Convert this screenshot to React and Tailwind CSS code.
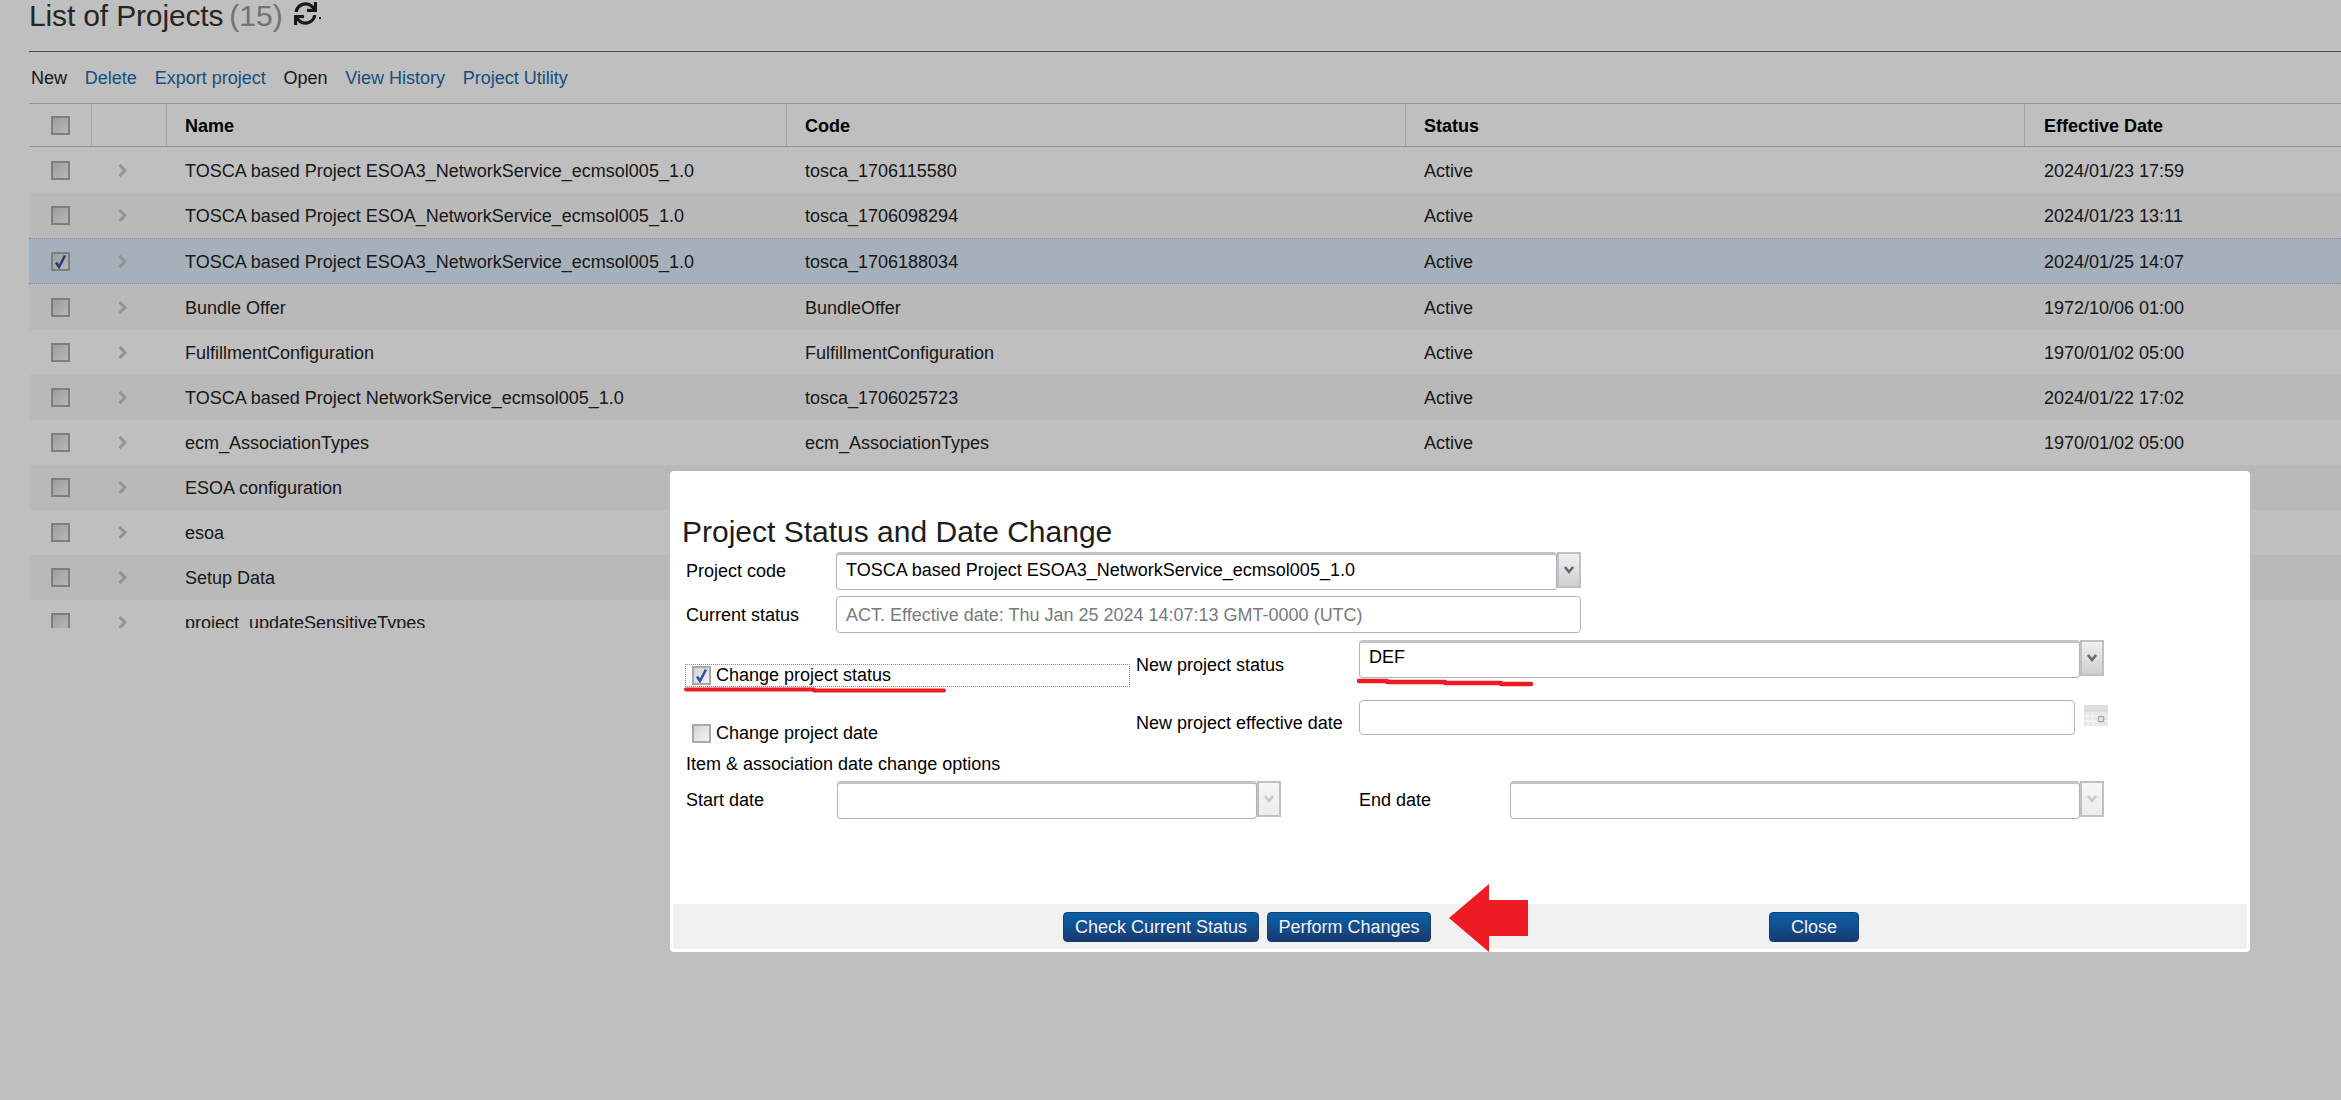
import { FaSync } from "react-icons/fa";

const projects = [
  { name: "TOSCA based Project ESOA3_NetworkService_ecmsol005_1.0", code: "tosca_1706115580", status: "Active", date: "2024/01/23 17:59", h: "h-[46px]" },
  { name: "TOSCA based Project ESOA_NetworkService_ecmsol005_1.0", code: "tosca_1706098294", status: "Active", date: "2024/01/23 13:11" },
  { name: "TOSCA based Project ESOA3_NetworkService_ecmsol005_1.0", code: "tosca_1706188034", status: "Active", date: "2024/01/25 14:07", h: "h-[46px]", selected: true },
  { name: "Bundle Offer", code: "BundleOffer", status: "Active", date: "1972/10/06 01:00", h: "h-[46px]" },
  { name: "FulfillmentConfiguration", code: "FulfillmentConfiguration", status: "Active", date: "1970/01/02 05:00" },
  { name: "TOSCA based Project NetworkService_ecmsol005_1.0", code: "tosca_1706025723", status: "Active", date: "2024/01/22 17:02" },
  { name: "ecm_AssociationTypes", code: "ecm_AssociationTypes", status: "Active", date: "1970/01/02 05:00" },
  { name: "ESOA configuration", code: "", status: "", date: "" },
  { name: "esoa", code: "", status: "", date: "" },
  { name: "Setup Data", code: "", status: "", date: "" },
  { name: "project_updateSensitiveTypes", code: "", status: "", date: "" },
];

const toolbar = [
  { label: "New", link: false },
  { label: "Delete", link: true },
  { label: "Export project", link: true },
  { label: "Open", link: false },
  { label: "View History", link: true },
  { label: "Project Utility", link: true },
];

const gridCols = "grid grid-cols-[63px_75px_620px_619px_619px_1fr]";

function Checkbox({ checked }) {
  return (
    <span className="flex h-[19px] w-[19px] shrink-0 items-center justify-center border-2 border-[#a9a9a9] bg-gradient-to-br from-[#cfd3d8] to-[#f4f4f4]">
      {checked && (
        <svg width="13" height="15" viewBox="0 0 13 15">
          <path d="M2 8.5 L5 13 L11 1.5" fill="none" stroke="#2f4fa8" strokeWidth="2.5" />
        </svg>
      )}
    </span>
  );
}

function Chevron() {
  return (
    <svg width="9" height="13" viewBox="0 0 9 13">
      <path d="M1.5 1 L7 6.5 L1.5 12" fill="none" stroke="#c4c4c4" strokeWidth="3" />
    </svg>
  );
}

function SelectBox({ value, width, leading = "leading-[30px]", disabled }) {
  return (
    <div className="flex items-start">
      <div className={`${width} h-[38px] truncate rounded-[4px] border border-[#b0b4bc] border-t-[3px] border-t-[#c4c4c4] bg-white pl-[9px] text-[18px] ${leading} text-black`}>
        {value}
      </div>
      <div className={`flex h-[36px] w-[24px] items-center justify-center border-2 border-[#c0c0c4] bg-gradient-to-b ${disabled ? "from-[#f6f6f6] to-[#ececec]" : "from-[#f0f0f0] to-[#cfcfcf]"}`}>
        <svg width="12" height="10" viewBox="0 0 12 10">
          <path d="M2 2 L6 7 L10 2" fill="none" stroke={disabled ? "#c8c8c8" : "#666666"} strokeWidth="2.6" />
        </svg>
      </div>
    </div>
  );
}

function CalendarIcon() {
  return (
    <svg width="24" height="21" viewBox="0 0 24 21" className="mt-[5px] ml-[9px]">
      <rect width="24" height="21" fill="#e6e6e6" />
      <rect y="0" width="24" height="7" fill="#dedede" />
      <path d="M4 7V21M9 7V21M14 7V21M19 7V21M0 11H24M0 16H24" stroke="#f8f8f8" strokeWidth="1" />
      <rect x="14.5" y="11.5" width="5" height="5" fill="none" stroke="#aaaaaa" strokeWidth="1.4" />
    </svg>
  );
}

function BlueButton({ children, className }) {
  return (
    <button className={`h-[30px] rounded-[4px] border border-[#1a3d70] bg-gradient-to-b from-[#0462ab] to-[#173a70] text-[18px] leading-[26px] text-[#f2f2f2] ${className}`}>
      {children}
    </button>
  );
}

function ProjectDialog() {
  return (
    <div className="absolute top-[471px] left-[670px] flex h-[481px] w-[1580px] flex-col rounded-[4px] bg-white pb-[3px] text-[18px] text-black">
      <h2 className="pt-[43px] pl-[12px] text-[30px] leading-[36px] text-[#1c1c1c]">Project Status and Date Change</h2>

      <div className="mt-[2px] flex items-center pl-[16px]">
        <span className="w-[150px]">Project code</span>
        <SelectBox value="TOSCA based Project ESOA3_NetworkService_ecmsol005_1.0" width="w-[721px]" />
      </div>

      <div className="mt-[6px] flex items-center pl-[16px]">
        <span className="w-[150px] pt-[1px]">Current status</span>
        <div className="h-[37px] w-[745px] rounded-[4px] border border-[#b0b4bc] pl-[9px] leading-[36px] text-[#7a7a7a]">
          ACT. Effective date: Thu Jan 25 2024 14:07:13 GMT-0000 (UTC)
        </div>
      </div>

      <div className="mt-[7px] flex pl-[15px]">
        <label className="mt-[24px] flex h-[23px] w-[445px] items-center gap-[5px] border border-dotted border-[#888888] pl-[6px]">
          <Checkbox checked />
          Change project status
        </label>
        <span className="mt-[12px] w-[229px] pl-[6px]">New project status</span>
        <SelectBox value="DEF" width="w-[721px]" leading="leading-[28px]" />
      </div>

      <div className="mt-[13px] flex pl-[15px]">
        <label className="mt-[24px] flex h-[19px] w-[445px] items-center gap-[5px] pl-[7px]">
          <Checkbox />
          Change project date
        </label>
        <span className="mt-[10px] w-[229px] pl-[6px]">New project effective date</span>
        <div className="h-[35px] w-[716px] rounded-[4px] border border-[#b0b4bc]" />
        <CalendarIcon />
      </div>

      <div className="mt-[9px] pl-[16px] leading-[24px]">Item &amp; association date change options</div>

      <div className="mt-[5px] flex items-center pl-[16px]">
        <span className="w-[151px]">Start date</span>
        <SelectBox value="" width="w-[420px]" disabled />
        <span className="ml-[78px] w-[151px]">End date</span>
        <SelectBox value="" width="w-[570px]" disabled />
      </div>

      <div className="mx-[3px] mt-auto flex h-[45px] items-center bg-[#f1f1f1] pl-[390px]">
        <BlueButton className="w-[196px]">Check Current Status</BlueButton>
        <BlueButton className="ml-[8px] w-[164px]">Perform Changes</BlueButton>
        <BlueButton className="ml-[338px] w-[90px]">Close</BlueButton>
      </div>
    </div>
  );
}

function Annotations() {
  return (
    <>
      <svg className="absolute top-[684px] left-[684px]" width="262" height="10" viewBox="0 0 262 10">
        <path d="M2 5.5 H130 M130 6.5 H260" fill="none" stroke="#ed1c24" strokeWidth="4" strokeLinecap="round" />
      </svg>
      <svg className="absolute top-[676px] left-[1357px]" width="176" height="12" viewBox="0 0 176 12">
        <path d="M2 5 H30 M30 6 H88 M88 7 H144 M144 8 H174" fill="none" stroke="#ed1c24" strokeWidth="4.5" strokeLinecap="round" />
      </svg>
      <svg className="absolute top-[884px] left-[1449px]" width="80" height="68" viewBox="0 0 80 68">
        <polygon points="0,34 40,0 40,16 79,16 79,52 40,52 40,68" fill="#ed1c24" />
      </svg>
    </>
  );
}

export default function App() {
  return (
    <div className="relative h-screen w-full overflow-hidden bg-white font-['Liberation_Sans',Arial,sans-serif]">
      <div className="pl-[29px]">
        <div className="flex h-[52px] items-start border-b border-[#666666] text-[30px] leading-[31px] text-[#333333]">
          <span className="tracking-[-0.15px]">List of Projects</span>
          <span className="ml-[6px] text-[#999999]">(15)</span>
          <FaSync className="mt-[2px] ml-[11px] text-[#222222]" size={23} />
          <span className="mt-[17px] ml-[2px] h-[2px] w-[2px] bg-black" />
        </div>

        <div className="flex h-[51px] items-center gap-[17.8px] pt-[2px] pl-[2px] text-[18px]">
          {toolbar.map((item) => (
            <span key={item.label} className={item.link ? "text-[#1a6aa8]" : "text-[#222222]"}>
              {item.label}
            </span>
          ))}
        </div>

        <div className={`${gridCols} h-[44px] border-y border-[#c0c8d0] text-[18px] font-bold text-black`}>
          <div className="flex items-center justify-center border-r border-[#dddddd]">
            <Checkbox />
          </div>
          <div className="border-r border-[#dddddd]" />
          <div className="flex items-center border-r border-[#dddddd] pt-[2px] pl-[18px]">Name</div>
          <div className="flex items-center border-r border-[#dddddd] pt-[2px] pl-[18px]">Code</div>
          <div className="flex items-center border-r border-[#dddddd] pt-[2px] pl-[18px]">Status</div>
          <div className="flex items-center pt-[2px] pl-[19px]">Effective Date</div>
        </div>

        <div className="h-[481px] overflow-hidden">
          {projects.map((p, i) => (
            <div
              key={i}
              className={`${gridCols} ${p.h || "h-[45px]"} items-center text-[18px] text-[#222222] ${
                p.selected ? "border-y border-dotted border-[#a9bde0] bg-[#deebf8]" : i % 2 === 1 ? "bg-[#f7f7f7]" : ""
              }`}
            >
              <div className="flex justify-center">
                <Checkbox checked={p.selected} />
              </div>
              <div className="pl-[26px]">
                <Chevron />
              </div>
              <div className="pt-[2px] pl-[18px]">{p.name}</div>
              <div className="pt-[2px] pl-[18px]">{p.code}</div>
              <div className="pt-[2px] pl-[18px]">{p.status}</div>
              <div className="pt-[2px] pl-[19px]">{p.date}</div>
            </div>
          ))}
        </div>
      </div>

      <div className="absolute inset-0 bg-black/25" />
      <ProjectDialog />
      <Annotations />
    </div>
  );
}
